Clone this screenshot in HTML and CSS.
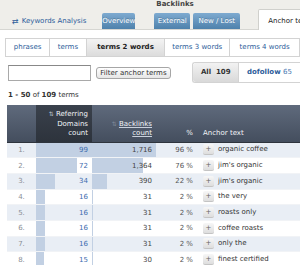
FILE: index.html
```html
<!DOCTYPE html>
<html lang="en">
<head>
<meta charset="UTF-8" />
<title>Anchor text</title>
<link rel="stylesheet" href="styles.css">
</head>
<body>

<div class="topbar">
  <a class="kw-link"><span class="kw-icon">⇄</span>Keywords Analysis</a>
  <a class="tab tab-blue tab-overview">Overview</a>
  <div class="group">
    <div class="group-label">Backlinks</div>
    <div class="group-tabs">
      <a class="tab tab-blue tab-external">External</a>
      <a class="tab tab-blue tab-newlost">New / Lost</a>
    </div>
  </div>
  <a class="tab tab-white">Anchor text</a>
</div>

<div class="subtabs">
  <a class="subtab st-phrases">phrases</a>
  <a class="subtab st-terms">terms</a>
  <a class="subtab st-t2 active">terms 2 words</a>
  <a class="subtab st-t3">terms 3 words</a>
  <a class="subtab st-t4">terms 4 words</a>
</div>

<div class="filters">
  <input class="filter-input" type="text">
  <button class="filter-btn">Filter anchor terms</button>
  <div class="toggle">
    <span class="toggle-item on">All&nbsp;&nbsp;109</span>
    <span class="toggle-item">dofollow <span class="num">65</span></span>
  </div>
</div>

<div class="count"><b>1 - 50</b> of <b>109</b> terms</div>

<table class="terms">
  <colgroup>
    <col class="c-num"><col class="c-ref"><col class="c-bl"><col class="c-pct"><col class="c-anchor">
  </colgroup>
  <thead>
    <tr>
      <th class="h-num"></th>
      <th class="h-ref sorted"><span class="sort">⇅</span> Referring<br>Domains<br>count</th>
      <th class="h-bl"><span class="sort dim">⇅</span> <u>Backlinks</u><br><u>count</u></th>
      <th class="h-pct">%</th>
      <th class="h-anchor">Anchor text</th>
    </tr>
  </thead>
  <tbody>
    <tr class="odd"><td class="n">1.</td><td class="ref"><span class="bar" style="width:100%"></span><span class="v">99</span></td><td class="bl"><span class="bar" style="width:100%"></span><span class="v">1,716</span></td><td class="pct">96 %</td><td class="anchor"><span class="plus">+</span>organic coffee</td></tr>
    <tr><td class="n">2.</td><td class="ref"><span class="bar" style="width:73%"></span><span class="v">72</span></td><td class="bl"><span class="bar" style="width:79%"></span><span class="v">1,364</span></td><td class="pct">76 %</td><td class="anchor"><span class="plus">+</span>jim's organic</td></tr>
    <tr class="odd"><td class="n">3.</td><td class="ref"><span class="bar" style="width:34%"></span><span class="v">34</span></td><td class="bl"><span class="bar" style="width:23%"></span><span class="v">390</span></td><td class="pct">22 %</td><td class="anchor"><span class="plus">+</span>jim's organic</td></tr>
    <tr><td class="n">4.</td><td class="ref"><span class="bar" style="width:16%"></span><span class="v">16</span></td><td class="bl"><span class="bar" style="width:2%"></span><span class="v">31</span></td><td class="pct">2 %</td><td class="anchor"><span class="plus">+</span>the very</td></tr>
    <tr class="odd"><td class="n">5.</td><td class="ref"><span class="bar" style="width:16%"></span><span class="v">16</span></td><td class="bl"><span class="bar" style="width:2%"></span><span class="v">31</span></td><td class="pct">2 %</td><td class="anchor"><span class="plus">+</span>roasts only</td></tr>
    <tr><td class="n">6.</td><td class="ref"><span class="bar" style="width:16%"></span><span class="v">16</span></td><td class="bl"><span class="bar" style="width:2%"></span><span class="v">31</span></td><td class="pct">2 %</td><td class="anchor"><span class="plus">+</span>coffee roasts</td></tr>
    <tr class="odd"><td class="n">7.</td><td class="ref"><span class="bar" style="width:16%"></span><span class="v">16</span></td><td class="bl"><span class="bar" style="width:2%"></span><span class="v">31</span></td><td class="pct">2 %</td><td class="anchor"><span class="plus">+</span>only the</td></tr>
    <tr><td class="n">8.</td><td class="ref"><span class="bar" style="width:15%"></span><span class="v">15</span></td><td class="bl"><span class="bar" style="width:2%"></span><span class="v">30</span></td><td class="pct">2 %</td><td class="anchor"><span class="plus">+</span>finest certified</td></tr>
  </tbody>
</table>

</body>
</html>
```

FILE: styles.css
```css
html, body {
  margin: 0; padding: 0;
}
body {
  width: 300px;
  height: 265px;
  overflow: hidden;
  background: #fff;
  font-family: "DejaVu Sans", Verdana, sans-serif;
  font-size: 7px;
  color: #333;
}
a { text-decoration: none; }

.topbar {
  display: flex;
  align-items: flex-end;
  height: 29px;
  padding-left: 12px;
  background: #efeeea;
  border-bottom: 1px solid #d6d6d2;
  white-space: nowrap;
}
.kw-link {
  display: flex;
  align-items: center;
  height: 16px;
  color: #2c5c9a;
  margin-right: 16px;
}
.kw-icon {
  font-size: 8px;
  margin-right: 3px;
}
.tab {
  display: block;
  height: 16px;
  line-height: 16px;
  text-align: center;
  border-radius: 2px 2px 0 0;
}
.tab-blue {
  color: #fff;
  background: linear-gradient(#7eaad0, #4e81ac);
  text-shadow: 0 -1px 0 rgba(0,0,0,0.2);
}
.tab-overview { width: 41px; }
.tab-external { width: 36px; }
.tab-newlost { width: 47px; }
.group {
  margin-left: 19px;
}
.group-label {
  font-weight: 700;
  color: #444;
  height: 13px;
  line-height: 9px;
  padding-left: 2px;
}
.group-tabs {
  display: flex;
  gap: 3px;
}
.tab-white {
  margin-left: 18px;
  height: 20px;
  line-height: 22px;
  margin-bottom: -1px;
  padding-left: 9px;
  width: 60px;
  text-align: left;
  color: #222;
  background: #fff;
  border: 1px solid #d0d0cc;
  border-bottom: none;
}

.subtabs {
  display: flex;
  margin: 8px 0 0 5px;
  height: 17px;
  border: 1px solid #d3d3d3;
  border-right: none;
  white-space: nowrap;
}
.subtab {
  display: block;
  line-height: 17px;
  text-align: center;
  color: #2c5c9a;
  border-right: 1px solid #d3d3d3;
}
.subtab.active {
  color: #222;
  font-weight: 700;
  background: linear-gradient(#f3f3f3, #dcdcdc);
}
.st-phrases { width: 44px; }
.st-terms { width: 36px; }
.st-t2 { width: 79px; }
.st-t3 { width: 65px; }
.st-t4 { width: 70px; }

.filters {
  display: flex;
  align-items: center;
  margin: 6px 0 0 8px;
  height: 19px;
}
.filter-input {
  box-sizing: border-box;
  width: 83px;
  height: 16px;
  margin: 0;
  border: 1px solid #a9a9a9;
  border-top-color: #888;
  background: #fff;
}
.filter-btn {
  box-sizing: border-box;
  margin: 0 0 0 5px;
  width: 81px;
  height: 12px;
  padding: 0;
  font-family: inherit;
  font-size: 7px;
  line-height: 10px;
  color: #333;
  border: 1px solid #a6a6a6;
  border-radius: 3px;
  background: linear-gradient(#ffffff, #e6e6e6);
}
.toggle {
  display: flex;
  margin-left: 21px;
  height: 19px;
  border: 1px solid #d3d3d3;
  border-right: none;
  border-radius: 3px 0 0 3px;
  white-space: nowrap;
}
.toggle-item {
  display: block;
  line-height: 19px;
  padding: 0 8px;
  font-weight: 700;
  color: #2c5c9a;
}
.toggle-item.on {
  width: 29px;
  color: #333;
  background: linear-gradient(#f2f2f2, #d9d9d9);
  border-radius: 3px 0 0 3px;
  border-right: 1px solid #d3d3d3;
}
.toggle-item .num {
  font-weight: 400;
  color: #4a78b0;
}

.count {
  margin: 8px 0 0 8px;
  height: 10px;
  line-height: 10px;
}
.count b { font-weight: 700; }

.terms {
  margin: 5px 0 0 7px;
  width: 320px;
  border-collapse: collapse;
  table-layout: fixed;
}
.c-num { width: 29px; }
.c-ref { width: 56px; }
.c-bl { width: 64px; }
.c-pct { width: 41px; }
.terms th {
  box-sizing: border-box;
  height: 37px;
  padding: 0 4px 3px;
  vertical-align: bottom;
  text-align: right;
  font-weight: 400;
  line-height: 9.5px;
  color: #f0f3f7;
  background: linear-gradient(#5f6a7c, #444e5e);
  border-bottom: 1px solid #2e343d;
}
.terms th.sorted {
  background: linear-gradient(#3a414c, #2d333c);
}
.terms th.h-anchor {
  text-align: left;
  padding-left: 6px;
}
.terms th u { text-decoration-color: #c8d0dc; }
.sort {
  font-size: 6px;
  color: #b7c0cc;
}
.sort.dim { color: #7f8a9a; }

.terms td {
  height: 15.7px;
  padding: 0 4px;
  box-sizing: border-box;
  line-height: 10px;
  white-space: nowrap;
  border-bottom: 1px solid #f1f3f6;
}
.terms tr.odd td {
  background: #e9eef5;
}
.terms td.n {
  text-align: center;
  color: #8a8f96;
}
.terms td.ref,
.terms td.bl {
  position: relative;
  text-align: right;
  padding: 0;
}
.bar {
  position: absolute;
  left: 0; top: 0; bottom: 0;
  background: #c2d0e3;
}
.v {
  position: relative;
  padding-right: 4px;
}
.terms td.ref .v { color: #3e6cae; }
.terms td.bl .v { color: #444; }
.terms td.pct {
  text-align: right;
  color: #555;
}
.terms td.anchor {
  padding-left: 6px;
  color: #333;
}
.plus {
  display: inline-block;
  width: 11px;
  height: 10px;
  line-height: 10px;
  margin-right: 4px;
  text-align: center;
  color: #666;
  background: linear-gradient(#f7f7f7, #dedede);
  border-bottom: 1px solid #c4c4c4;
  border-radius: 2px;
}
```
